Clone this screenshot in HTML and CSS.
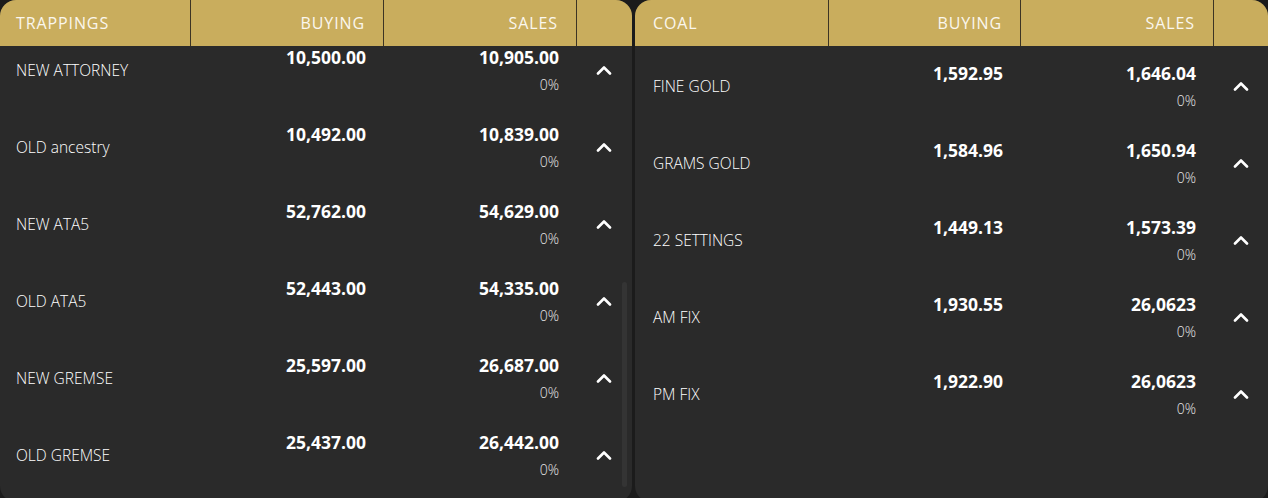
FILE: index.html
```html
<!DOCTYPE html>
<html lang="en">
<head>
    <meta charset="UTF-8">
    <meta name="viewport" content="width=device-width, initial-scale=1.0">
    <title>Rates</title>
    <link rel="stylesheet" href="styles.css">
</head>
<body>
    <div class="board">
        <div class="panel left">
            <div class="head">
                <div class="hcell name">TRAPPINGS</div>
                <div class="hcell">BUYING</div>
                <div class="hcell">SALES</div>
                <div class="hcell arrow"></div>
            </div>
            <div class="list">
                <div class="rows scrolled">
                    <div class="row">
                        <div class="label">NEW ATTORNEY</div>
                        <div class="val"><span class="num">10,500.00</span></div>
                        <div class="val"><span class="num">10,905.00</span><span class="pct">0%</span></div>
                        <div class="arrow"><svg width="16" height="10" viewBox="0 0 16 10"><polyline points="2,8.5 8,2.5 14,8.5" /></svg></div>
                    </div>
                    <div class="row">
                        <div class="label">OLD ancestry</div>
                        <div class="val"><span class="num">10,492.00</span></div>
                        <div class="val"><span class="num">10,839.00</span><span class="pct">0%</span></div>
                        <div class="arrow"><svg width="16" height="10" viewBox="0 0 16 10"><polyline points="2,8.5 8,2.5 14,8.5" /></svg></div>
                    </div>
                    <div class="row">
                        <div class="label">NEW ATA5</div>
                        <div class="val"><span class="num">52,762.00</span></div>
                        <div class="val"><span class="num">54,629.00</span><span class="pct">0%</span></div>
                        <div class="arrow"><svg width="16" height="10" viewBox="0 0 16 10"><polyline points="2,8.5 8,2.5 14,8.5" /></svg></div>
                    </div>
                    <div class="row">
                        <div class="label">OLD ATA5</div>
                        <div class="val"><span class="num">52,443.00</span></div>
                        <div class="val"><span class="num">54,335.00</span><span class="pct">0%</span></div>
                        <div class="arrow"><svg width="16" height="10" viewBox="0 0 16 10"><polyline points="2,8.5 8,2.5 14,8.5" /></svg></div>
                    </div>
                    <div class="row">
                        <div class="label">NEW GREMSE</div>
                        <div class="val"><span class="num">25,597.00</span></div>
                        <div class="val"><span class="num">26,687.00</span><span class="pct">0%</span></div>
                        <div class="arrow"><svg width="16" height="10" viewBox="0 0 16 10"><polyline points="2,8.5 8,2.5 14,8.5" /></svg></div>
                    </div>
                    <div class="row">
                        <div class="label">OLD GREMSE</div>
                        <div class="val"><span class="num">25,437.00</span></div>
                        <div class="val"><span class="num">26,442.00</span><span class="pct">0%</span></div>
                        <div class="arrow"><svg width="16" height="10" viewBox="0 0 16 10"><polyline points="2,8.5 8,2.5 14,8.5" /></svg></div>
                    </div>
                </div>
                <div class="thumb"></div>
            </div>
        </div>

        <div class="panel right">
            <div class="head">
                <div class="hcell name">COAL</div>
                <div class="hcell">BUYING</div>
                <div class="hcell">SALES</div>
                <div class="hcell arrow"></div>
            </div>
            <div class="list">
                <div class="rows">
                    <div class="row">
                        <div class="label">FINE GOLD</div>
                        <div class="val"><span class="num">1,592.95</span></div>
                        <div class="val"><span class="num">1,646.04</span><span class="pct">0%</span></div>
                        <div class="arrow"><svg width="16" height="10" viewBox="0 0 16 10"><polyline points="2,8.5 8,2.5 14,8.5" /></svg></div>
                    </div>
                    <div class="row">
                        <div class="label">GRAMS GOLD</div>
                        <div class="val"><span class="num">1,584.96</span></div>
                        <div class="val"><span class="num">1,650.94</span><span class="pct">0%</span></div>
                        <div class="arrow"><svg width="16" height="10" viewBox="0 0 16 10"><polyline points="2,8.5 8,2.5 14,8.5" /></svg></div>
                    </div>
                    <div class="row">
                        <div class="label">22 SETTINGS</div>
                        <div class="val"><span class="num">1,449.13</span></div>
                        <div class="val"><span class="num">1,573.39</span><span class="pct">0%</span></div>
                        <div class="arrow"><svg width="16" height="10" viewBox="0 0 16 10"><polyline points="2,8.5 8,2.5 14,8.5" /></svg></div>
                    </div>
                    <div class="row">
                        <div class="label">AM FIX</div>
                        <div class="val"><span class="num">1,930.55</span></div>
                        <div class="val"><span class="num">26,0623</span><span class="pct">0%</span></div>
                        <div class="arrow"><svg width="16" height="10" viewBox="0 0 16 10"><polyline points="2,8.5 8,2.5 14,8.5" /></svg></div>
                    </div>
                    <div class="row">
                        <div class="label">PM FIX</div>
                        <div class="val"><span class="num">1,922.90</span></div>
                        <div class="val"><span class="num">26,0623</span><span class="pct">0%</span></div>
                        <div class="arrow"><svg width="16" height="10" viewBox="0 0 16 10"><polyline points="2,8.5 8,2.5 14,8.5" /></svg></div>
                    </div>
                </div>
            </div>
        </div>
    </div>
</body>
</html>
```

FILE: styles.css
```css
html, body {
    margin: 0;
    padding: 0;
    height: 100%;
    overflow: hidden;
}

body {
    background: #1b1b1b;
    font-family: "Open Sans", "Liberation Sans", sans-serif;
    color: #f2f2f2;
}

.board {
    display: flex;
    gap: 3px;
    height: 502px;
}

.panel {
    background: #2a2a2a;
    border-radius: 16px;
    overflow: hidden;
    display: flex;
    flex-direction: column;
}

.panel.left {
    width: 632px;
}

.panel.right {
    flex: 1;
}

.head {
    display: grid;
    grid-template-columns: 191px 193px 193px 1fr;
    height: 46px;
    background: #c9ad5d;
}

.panel.right .head,
.panel.right .row {
    grid-template-columns: 194px 192px 193px 1fr;
}

.hcell {
    display: flex;
    align-items: center;
    justify-content: flex-end;
    padding: 0 18px;
    font-size: 16px;
    letter-spacing: 0.9px;
    color: #fbf7ee;
    border-right: 1px solid #3c3424;
}

.hcell.name {
    justify-content: flex-start;
    padding-left: 16px;
}

.panel.right .hcell.name {
    padding-left: 18px;
}

.hcell.arrow {
    border-right: none;
}

.list {
    position: relative;
    flex: 1;
    overflow: hidden;
}

.rows {
    padding-top: 1px;
}

.rows.scrolled {
    margin-top: -15px;
    padding-top: 0;
}

.row {
    display: grid;
    grid-template-columns: 191px 193px 193px 1fr;
    height: 77px;
    align-items: center;
}

.label {
    padding-left: 16px;
    font-size: 15.5px;
    font-weight: 300;
    color: #ffffff;
}

.panel.right .label {
    padding-left: 18px;
}

.val {
    align-self: start;
    padding: 14px 18px 0 0;
    display: flex;
    flex-direction: column;
    align-items: flex-end;
}

.num {
    font-size: 17.5px;
    font-weight: 700;
    line-height: 24px;
    color: #ffffff;
}

.pct {
    margin-top: 7px;
    font-size: 14px;
    font-weight: 300;
    line-height: 18px;
    color: #e8e8e8;
}

.arrow {
    display: flex;
    justify-content: center;
}

.arrow svg {
    display: block;
}

.arrow polyline {
    fill: none;
    stroke: #ffffff;
    stroke-width: 2.6;
    stroke-linecap: round;
    stroke-linejoin: round;
}

.panel.left .arrow {
    padding-right: 2px;
}

.thumb {
    position: absolute;
    right: 5px;
    top: 236px;
    width: 5px;
    height: 205px;
    border-radius: 3px;
    background: #343434;
}
```
